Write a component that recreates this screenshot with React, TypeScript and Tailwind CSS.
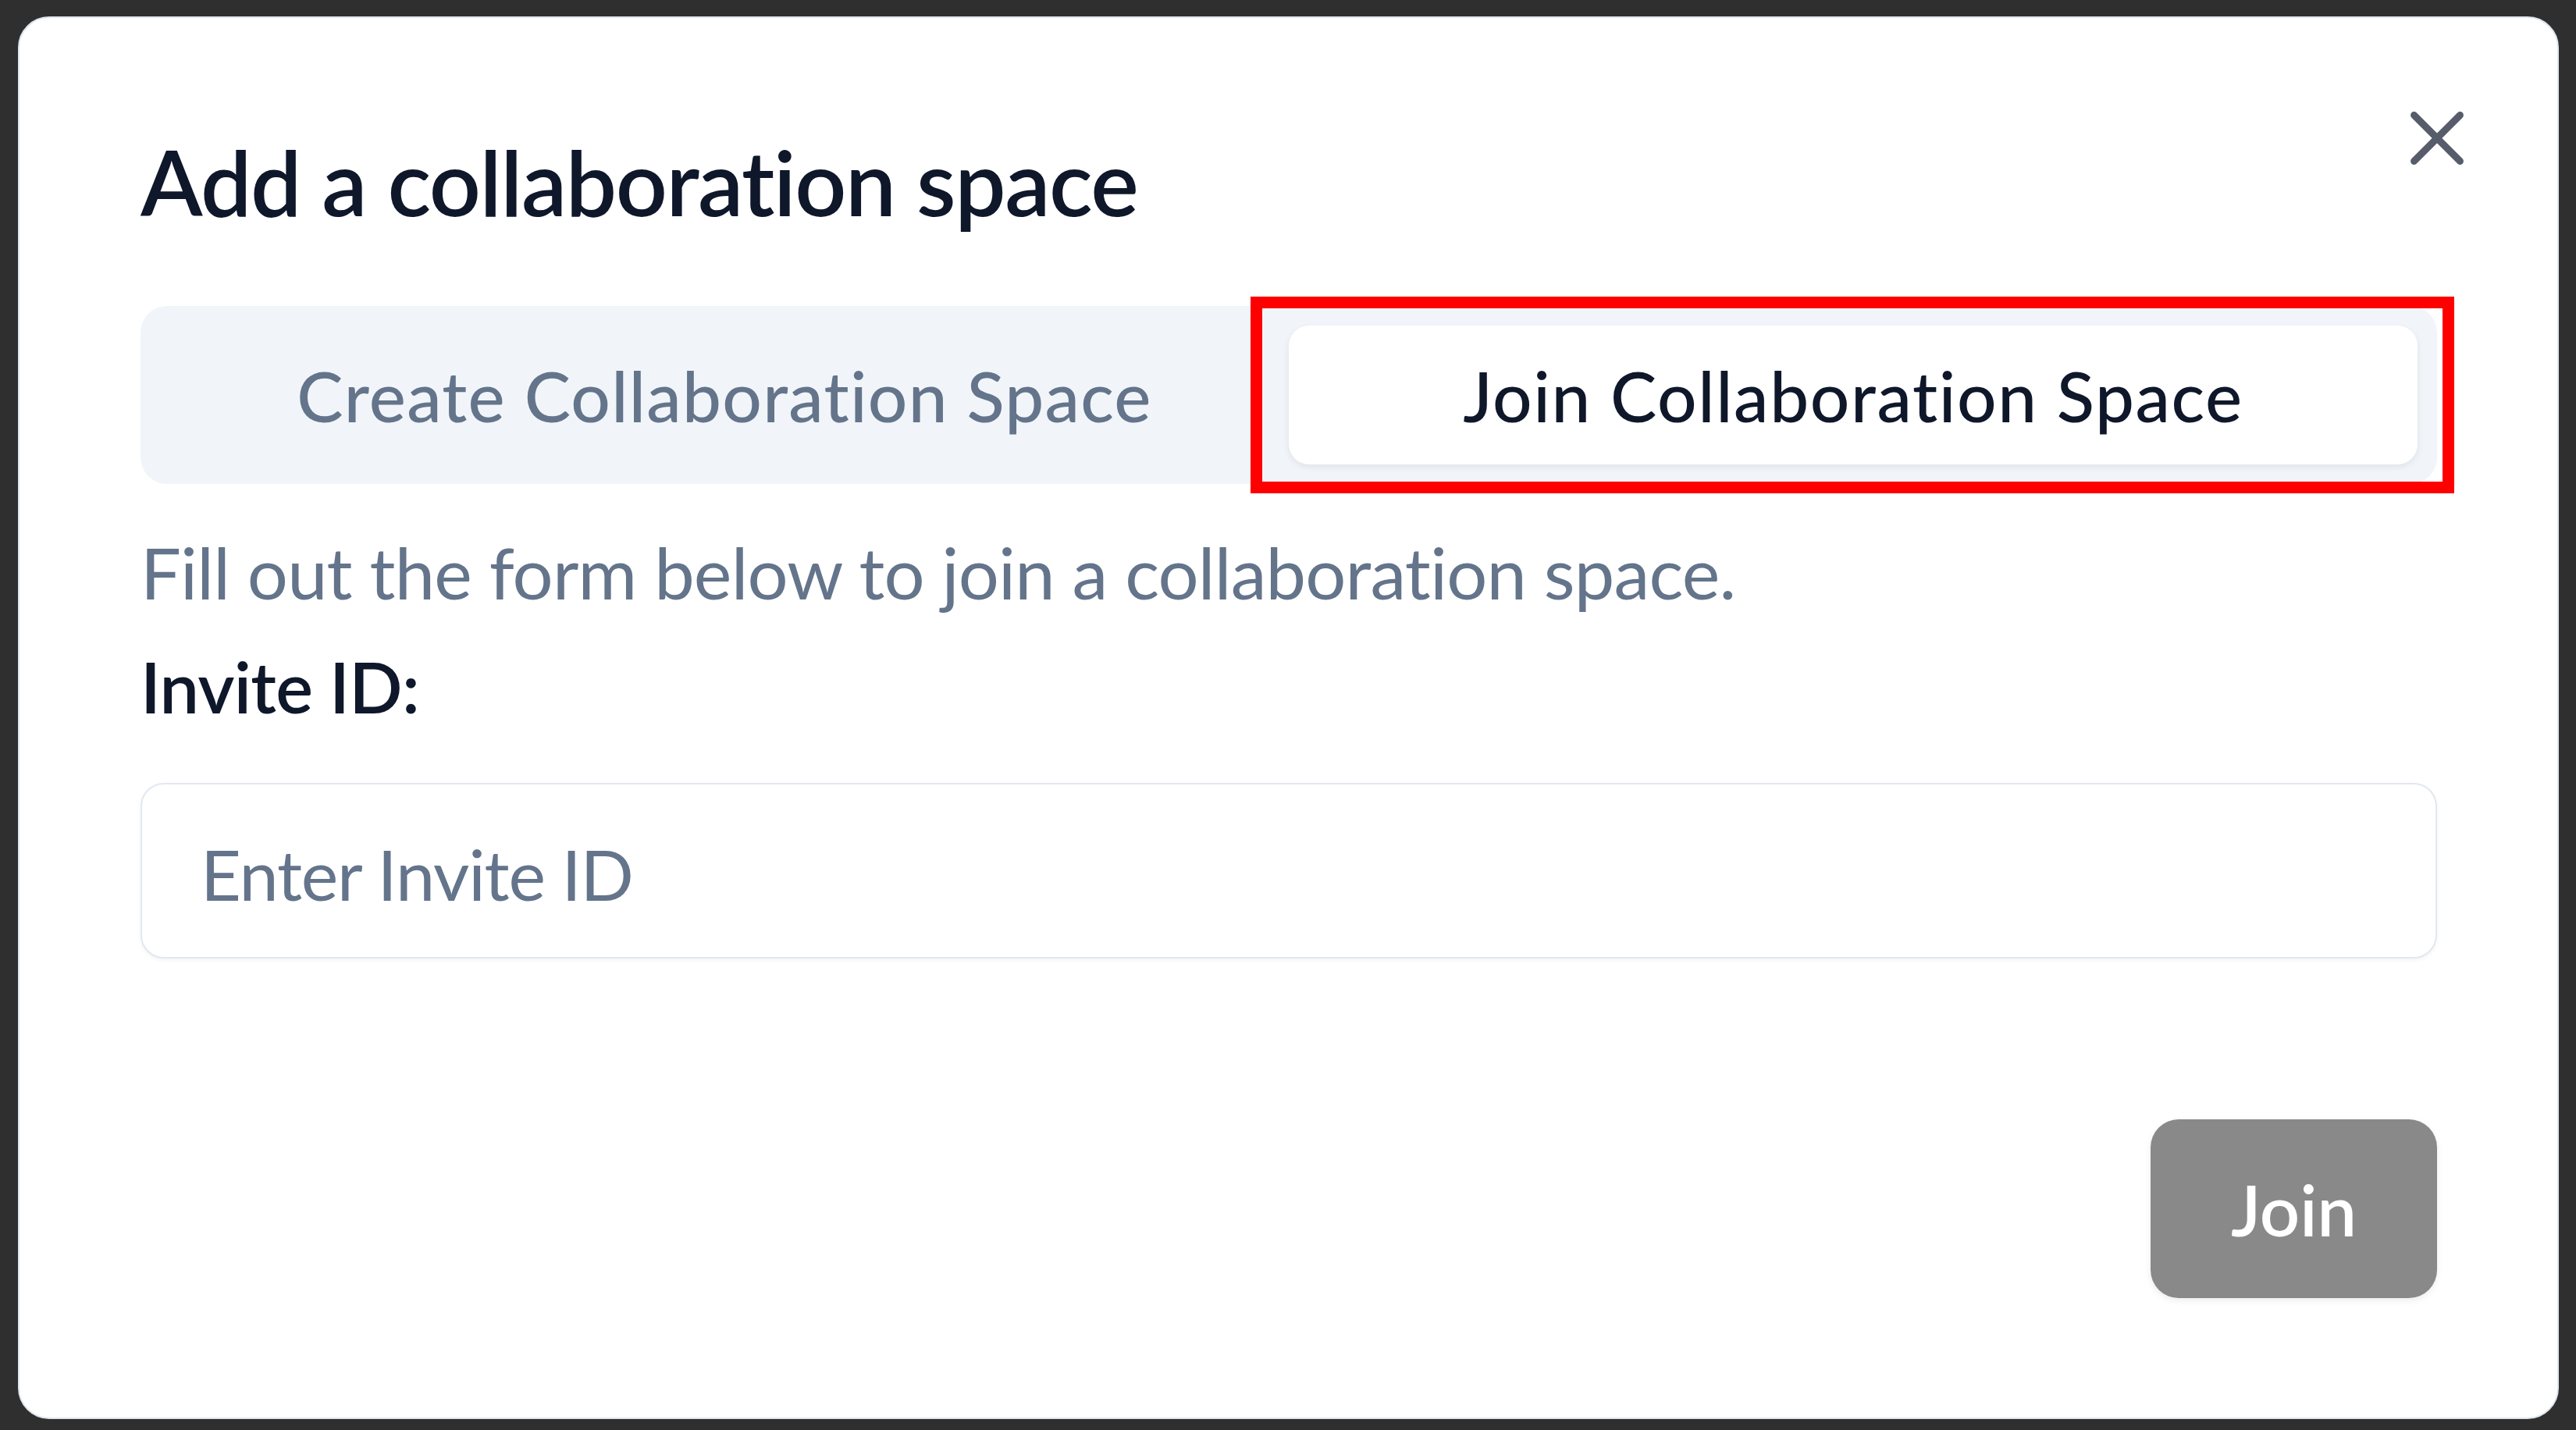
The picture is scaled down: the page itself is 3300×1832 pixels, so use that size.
import React from "react";
import { X } from "lucide-react";

export default function App() {
  return (
    <div className="relative w-[3300px] h-[1832px] bg-[#2f2f2f] pt-[21px] pl-[23px] font-['Lato',sans-serif] overflow-hidden">
      <div className="relative w-[3255px] h-[1797px] bg-white rounded-[40px] border-2 border-[#dfe5ee] pt-[140px] pl-[155px] pr-[154px] flex flex-col">
        <button
          type="button"
          className="absolute top-[95px] right-[95px] w-[118px] h-[118px] text-[#575c6a] flex items-center justify-center"
        >
          <X size={118} strokeWidth={1.8} />
        </button>

        <h2 className="h-[140px] leading-[140px] text-[116px] font-semibold text-[#0f172a] tracking-[-1.45px] whitespace-nowrap">
          Add a collaboration space
        </h2>

        <div className="mt-[89px] h-[228px] p-[25px] bg-[#f1f5f9] rounded-[34px] flex">
          <div className="flex-1 flex items-center justify-center rounded-[26px] text-[89px] leading-[107px] font-medium text-[#64748b] tracking-[1.25px] whitespace-nowrap">
            Create Collaboration Space
          </div>
          <div className="flex-1 flex items-center justify-center rounded-[26px] bg-white shadow-[0_3px_8px_rgba(15,23,42,0.08)] text-[89px] leading-[107px] font-medium text-[#0f172a] tracking-[1.6px] whitespace-nowrap">
            Join Collaboration Space
          </div>
        </div>

        <p className="mt-[58px] h-[110px] leading-[110px] text-[92px] text-[#64748b] tracking-[-0.82px] whitespace-nowrap">
          Fill out the form below to join a collaboration space.
        </p>

        <label className="mt-[37px] h-[108px] leading-[108px] text-[90px] font-semibold text-[#0f172a] tracking-[-0.7px] whitespace-nowrap">
          Invite ID:
        </label>

        <input
          type="text"
          placeholder="Enter Invite ID"
          className="mt-[70px] h-[225px] w-full rounded-[30px] border-2 border-[#e2e8f0] bg-white pl-[75px] pr-[75px] pt-[6px] text-[90px] tracking-[-1.2px] text-[#0f172a] placeholder:text-[#64748b] shadow-[0_2px_5px_rgba(15,23,42,0.05)] outline-none"
        />

        <div className="mt-[206px] flex justify-end">
          <button
            type="button"
            className="w-[367px] h-[229px] rounded-[36px] bg-[#898989] text-white text-[90px] leading-[108px] font-semibold shadow-[0_3px_8px_rgba(0,0,0,0.08)] flex items-center justify-center"
          >
            Join
          </button>
        </div>
      </div>

      <div className="absolute left-[1602px] top-[380px] w-[1542px] h-[252px] border-[15px] border-[#ff0000] pointer-events-none" />
    </div>
  );
}
